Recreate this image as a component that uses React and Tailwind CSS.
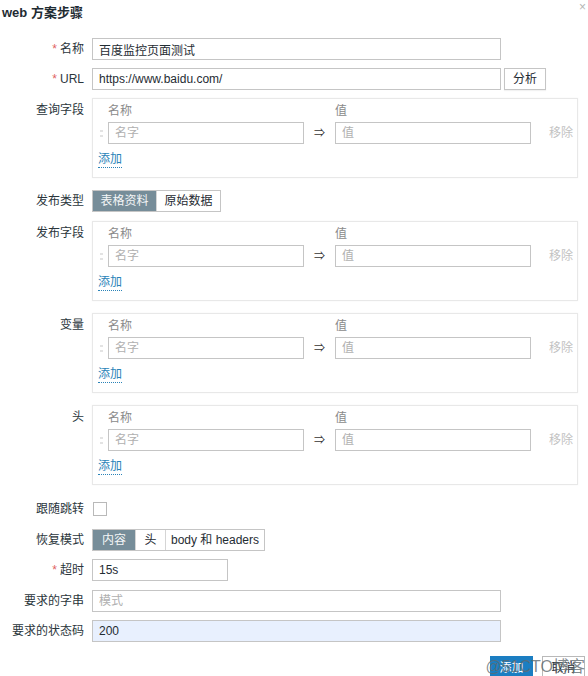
import React from "react";

const font = { fontFamily: '"Liberation Sans", "Noto Sans CJK SC", sans-serif' };

const Label = ({ children, required, top }) => (
  <div
    className={`w-[92px] shrink-0 pr-[8px] text-right leading-[22px] text-[#2b363c] ${
      top ? "pt-[1px]" : ""
    }`}
  >
    {required && <span className="mr-[3px] text-[#e0625f]">*</span>}
    {children}
  </div>
);

const TextInput = ({ value, placeholder, className = "" }) => (
  <input
    readOnly
    defaultValue={value}
    placeholder={placeholder}
    className={`h-[22px] border border-[#c5c5c5] px-[6px] text-[12px] text-[#1f2c33] outline-none placeholder:text-[#b0b0b0] ${className}`}
  />
);

// 名称 / 值 pair box
const PairBox = () => (
  <div className="w-[486px] border border-[#e8e8e8] bg-white pl-[5px] pt-[2px] pb-[7px] shadow-[0_0_2px_rgba(0,0,0,0.04)]">
    <div className="flex h-[20px] items-center text-[#8a8a8a]">
      <div className="w-[10px]" />
      <div className="w-[196px]">名称</div>
      <div className="w-[31px]" />
      <div>值</div>
    </div>
    <div className="mt-[1px] flex items-center">
      <div className="flex w-[10px] flex-col items-start gap-[3px] pl-[2px]">
        <span className="h-[2px] w-[3px] bg-[#e3e3e3]" />
        <span className="h-[2px] w-[3px] bg-[#e3e3e3]" />
      </div>
      <TextInput placeholder="名字" className="w-[196px]" />
      <div className="w-[31px] text-center text-[11px] text-[#333]">⇒</div>
      <TextInput placeholder="值" className="w-[196px]" />
      <div className="ml-[18px] text-[#c2c2c2]">移除</div>
    </div>
    <div className="mt-[6px] flex h-[20px] items-center">
      <span className="border-b border-dotted border-[#2a83b8] leading-[15px] text-[#2a83b8]">添加</span>
    </div>
  </div>
);

const Segmented = ({ items }) => (
  <div className="flex h-[22px] border border-[#c5c5c5] bg-white">
    {items.map((it, i) => (
      <div
        key={it.label}
        className={`flex h-full items-center justify-center ${it.w} ${
          it.active ? "bg-[#768d99] text-[#f4f6f7]" : "text-[#1f2c33]"
        } ${i > 0 ? "border-l border-[#d5d5d5]" : ""}`}
      >
        {it.label}
      </div>
    ))}
  </div>
);

export default function App() {
  return (
    <div
      className="relative h-[676px] w-[588px] overflow-hidden bg-white text-[12px] text-[#1f2c33]"
      style={font}
    >
      <div className="h-[38px] pl-[2px] pt-[5px] text-[13px] font-bold leading-[16px]">web 方案步骤</div>
      <span className="absolute right-[2px] top-[-2px] text-[12px] text-[#b5b5b5]">×</span>

      <div className="mb-[8px] flex">
        <Label required>名称</Label>
        <TextInput value="百度监控页面测试" className="w-[409px]" />
      </div>

      <div className="mb-[8px] flex">
        <Label required>URL</Label>
        <TextInput value="https://www.baidu.com/" className="w-[409px]" />
        <button className="ml-[3px] h-[22px] w-[42px] border border-[#c5c5c5] bg-white text-[12px] text-[#1f2c33] shadow-[0_1px_1px_rgba(0,0,0,0.05)]">
          分析
        </button>
      </div>

      <div className="mb-[12px] flex">
        <Label top>查询字段</Label>
        <PairBox />
      </div>

      <div className="mb-[9px] flex">
        <Label>发布类型</Label>
        <Segmented
          items={[
            { label: "表格资料", w: "w-[63px]", active: true },
            { label: "原始数据", w: "w-[64px]" },
          ]}
        />
      </div>

      <div className="mb-[12px] flex">
        <Label top>发布字段</Label>
        <PairBox />
      </div>

      <div className="mb-[12px] flex">
        <Label top>变量</Label>
        <PairBox />
      </div>

      <div className="mb-[13px] flex">
        <Label top>头</Label>
        <PairBox />
      </div>

      <div className="mb-[9px] flex items-center">
        <Label>跟随跳转</Label>
        <div className="ml-[1px] h-[14px] w-[14px] border border-[#b9b9b9] bg-white" />
      </div>

      <div className="mb-[8px] flex">
        <Label>恢复模式</Label>
        <Segmented
          items={[
            { label: "内容", w: "w-[42px]", active: true },
            { label: "头", w: "w-[30px]" },
            { label: "body 和 headers", w: "w-[99px]" },
          ]}
        />
      </div>

      <div className="mb-[9px] flex">
        <Label required>超时</Label>
        <TextInput value="15s" className="w-[136px]" />
      </div>

      <div className="mb-[8px] flex">
        <Label>要求的字串</Label>
        <TextInput placeholder="模式" className="w-[409px]" />
      </div>

      <div className="mb-[14px] flex">
        <Label>要求的状态码</Label>
        <TextInput value="200" className="w-[409px] bg-[#e8f0fe]" />
      </div>

      <div className="flex justify-end gap-[9px] pr-[3px]">
        <button className="h-[24px] w-[43px] bg-[#1b7ec2] text-[12px] text-white">添加</button>
        <button className="h-[24px] w-[43px] border border-[#b9b9b9] bg-white text-[12px] text-[#1f2c33]">取消</button>
      </div>

      <span className="absolute bottom-[0px] right-[3px] text-[16px] leading-[18px] text-[#5f6a70]/80">@51CTO博客</span>
    </div>
  );
}
